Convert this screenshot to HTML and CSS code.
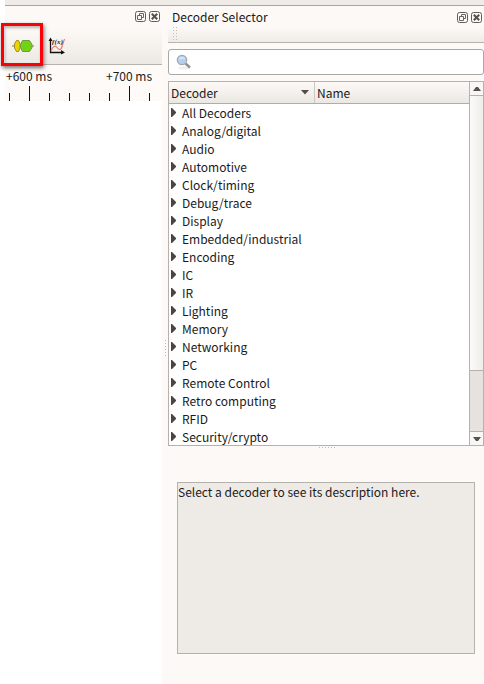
FILE: index.html
```
<!DOCTYPE html>
<html lang="en">
<head>
<meta charset="utf-8">
<title>Decoder Selector</title>
<link rel="stylesheet" href="styles.css">
</head>
<body>
<svg class="defs" width="0" height="0">
  <symbol id="float" viewBox="0 0 11 11"><rect x=".5" y=".5" width="10" height="10" rx="2" fill="#fcf8f5" stroke="#615e5a"/><path d="M4.5 4.5v-2h4v4h-2M2.500 4.500h4v4h-4z" fill="none" stroke="#696662"/></symbol>
  <symbol id="close" viewBox="0 0 11 11"><rect x=".5" y=".5" width="10" height="10" rx="2" fill="#fcf8f5" stroke="#615e5a"/><path d="M2.800 2.800l5.400 5.400M8.200 2.800l-5.400 5.400" fill="none" stroke="#55524e" stroke-width="2"/></symbol>
</svg>
<div class="window">
  <div class="topbar"></div>
  <div class="main">
    <section class="left">
      <div class="title"><span></span><svg class="btn"><use href="#float"/></svg><svg class="btn"><use href="#close"/></svg></div>
      <div class="tools">
        <svg class="decode" viewBox="0 0 22 14"><path d="M0 7h22" stroke="#777b68"/><path d="M4.500 1.500h2L8 5v4l-1.500 3.500h-2L2.500 9V5z" fill="#edd400" stroke="#a08c20"/><path d="M10.500 1.500h7L20 5.500v3l-2.500 4h-7l-2-4v-3z" fill="#73d216" stroke="#6b9c42"/></svg>
        <svg class="math" viewBox="0 0 18 18"><path d="M2.500 2v13.500H15" fill="none" stroke="#111" stroke-width="1.300"/><path d="M.5 4l2-3.500 2 3.500zM13 13l4 2.500-4 2z" fill="#111"/><path d="M3 14C5 9 7 8 9 10.500S13 14 14.500 8L16.500 2" fill="none" stroke="#ee7777" stroke-width="1.100"/><text x="4" y="6.500" textLength="11">f(x)</text></svg>
      </div>
      <div class="ruler">
        <div class="times"><span>+600 ms</span><span>+700 ms</span></div>
        <div class="ticks"><i></i><i class="major"></i><i></i><i></i><i></i><i></i><i class="major"></i><i></i></div>
      </div>
      <div class="highlight"></div>
    </section>
    <div class="split-v"><svg width="3" height="18"><path d="M1.500 1v17" stroke="#c0bbb7" stroke-dasharray="1 2"/></svg></div>
    <section class="right">
      <div class="title"><span>Decoder Selector</span><svg class="btn"><use href="#float"/></svg><svg class="btn"><use href="#close"/></svg></div>
      <div class="strip"><svg width="6" height="16"><path d="M1.500 0v16M4.500 0v16" stroke="#c3beba" stroke-dasharray="1 2"/></svg></div>
      <div class="search"><svg width="16" height="16" viewBox="0 0 16 16"><ellipse cx="8" cy="14" rx="6" ry="1.500" fill="#eee"/><path d="M9.500 9.500l4.500 4" stroke="#929292" stroke-width="2.500"/><circle cx="6" cy="6" r="4.700" fill="#b4cef0" stroke="#a6a9ad" stroke-width="1.300"/><path d="M3 6c0-2 1.500-3 3-3 2 0 3 1 3 2C7 4.500 5 5 3 6" fill="#dce9fa"/></svg></div>
      <div class="tree">
        <div class="table">
          <div class="head"><div class="dec">Decoder<svg width="8" height="5"><path d="M0 0h8L4 4.500z" fill="#504d49"/></svg></div><div class="name">Name</div></div>
          <ul>
            <li>All Decoders</li><li>Analog/digital</li><li>Audio</li><li>Automotive</li><li>Clock/timing</li><li>Debug/trace</li><li>Display</li><li>Embedded/industrial</li><li>Encoding</li><li>IC</li><li>IR</li><li>Lighting</li><li>Memory</li><li>Networking</li><li>PC</li><li>Remote Control</li><li>Retro computing</li><li>RFID</li><li>Security/crypto</li>
          </ul>
        </div>
        <div class="scroll"><div class="arrow"><svg width="8" height="4"><path d="M0 4h8L5 0H3z" fill="#55524e"/></svg></div><div class="thumb"></div><div class="track"></div><div class="arrow"><svg width="8" height="4"><path d="M0 0h8L5 4H3z" fill="#55524e"/></svg></div></div>
      </div>
      <div class="split-h"><svg width="17" height="3"><path d="M0 1.500h17" stroke="#c0bbb7" stroke-dasharray="1 2"/></svg></div>
      <div class="desc">Select a decoder to see its description here.</div>
    </section>
  </div>
</div>
</body>
</html>
```

FILE: styles.css
```
* { box-sizing: border-box; }
body { margin: 0; background: #fff; color: #1a1a1a; font: 12px/18px "Noto Sans CJK SC", "Noto Sans", sans-serif; overflow: hidden; }
svg { display: block; flex: none; }
.defs { position: absolute; }
.window { width: 484px; height: 684px; padding-left: 5px; }
.topbar { height: 6px; background: #efebe7; border-bottom: 1px solid #aaa6a2; }
.main { display: flex; height: 678px; }
.left { width: 157px; position: relative; }
.title { height: 21px; display: flex; align-items: center; gap: 3px; background: #fdf9f6; }
.title span { flex: 1; }
.btn { width: 11px; height: 11px; }
.left .title { padding-right: 2px; height: 22px; }
.left .title, .right .title { padding-bottom: 1px; }
.tools { height: 37px; display: flex; padding: 9px 0 0 7px; gap: 14px; background: linear-gradient(#fdf9f6, #ece8e3); border-bottom: 1px solid #b5b1ad; }
.decode { width: 22px; height: 14px; margin-top: 2px; }
.math { width: 18px; height: 18px; }
.math text { font: italic bold 7px "Liberation Serif", serif; fill: #222; }
.ruler { background: #fdfaf8; }
.times { display: flex; padding: 2px 0 0 1px; height: 21px; }
.times span { flex: 0 0 100px; white-space: nowrap; }
.ticks { display: flex; align-items: flex-end; gap: 19px; height: 15px; padding-left: 4px; }
.ticks i { width: 1px; height: 8px; background: #111; }
.ticks .major { height: 15px; }
.highlight { position: absolute; left: -4px; top: 17px; width: 42px; height: 43px; border: 3px solid #fb0007; box-shadow: 1px 2px 4px #0008, inset 1px 2px 3px #0004; }
.split-v { width: 6px; background: #fdf9f6; padding: 333px 0 0 2px; }
.right { width: 316px; background: #fdf9f6; }
.right .title { padding: 1px 2px 0 4px; }
.strip { height: 16px; padding-left: 4px; background: linear-gradient(#fdf9f6, #efebe6); border-bottom: 1px solid #b5b1ad; }
.search { height: 26px; margin-top: 6px; padding: 4px 7px; background: #fff; border: 1px solid #aaa7a4; border-radius: 3px; }
.tree { height: 365px; margin-top: 6px; display: flex; background: #fff; border: 1px solid #b4b1ae; }
.table { width: 300px; overflow: hidden; }
.head { height: 22px; display: flex; background: linear-gradient(#fdf9f6, #ebe7e3); border-bottom: 1px solid #b0ada9; line-height: 22px; }
.dec { width: 146px; display: flex; justify-content: space-between; align-items: center; padding: 0 5px 0 2px; border-right: 1px solid #cbc7c3; }
.name { padding-left: 2px; }
ul { list-style: none; margin: 0; padding: 0; }
li { height: 18px; display: flex; align-items: center; gap: 6px; padding-left: 2px; }
li::before { content: ""; width: 5px; height: 9px; margin-bottom: 1px; background: #484542; clip-path: polygon(0 0, 20% 0, 100% 45%, 100% 55%, 20% 100%, 0 100%); }
.scroll { width: 14px; display: flex; flex-direction: column; border-left: 1px solid #b4b1ae; }
.arrow { height: 13px; display: flex; align-items: center; justify-content: center; background: #f9f7f5; }
.thumb { height: 276px; border: solid #b4b1ae; border-width: 1px 0; background: linear-gradient(90deg, #fcfaf8, #efede9); }
.track { flex: 1; background: #e6e2df; border-bottom: 1px solid #b4b1ae; }
.split-h { height: 36px; padding: 0 0 0 151px; }
.desc { width: 298px; height: 172px; margin-left: 9px; background: #eeebe6; border: 1px solid #b5b2ae; }
```
